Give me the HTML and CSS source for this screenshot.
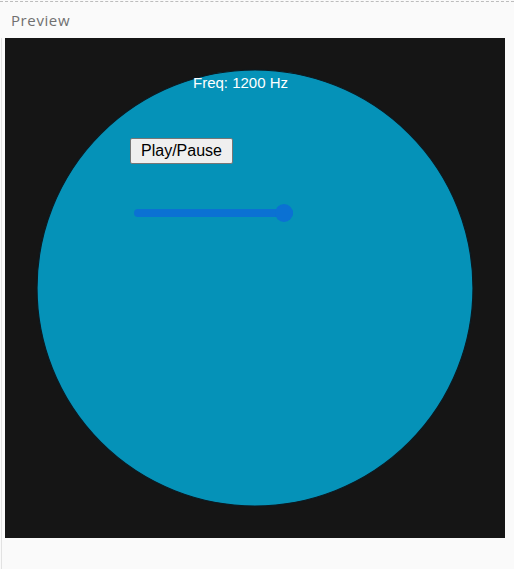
FILE: index.html
```html
<!DOCTYPE html>
<html>
<head>
<meta charset="utf-8">
<link rel="stylesheet" href="styles.css">
</head>
<body>
<div class="panel">
  <div class="title">Preview</div>
  <div class="stage">
    <svg class="disc" width="500" height="500" viewBox="0 0 500 500">
      <circle cx="250" cy="250" r="218" fill="#0592b8" stroke="#0b1a22" stroke-width="1.2"/>
    </svg>
    <div class="freq">Freq: 1200 Hz</div>
    <button class="play">Play/Pause</button>
    <input class="slider" type="range" min="100" max="1200" value="1200">
  </div>
</div>
</body>
</html>
```
FILE: styles.css
```css
html, body {
  margin: 0;
  padding: 0;
  background: #fafafa;
}
.panel {
  width: 514px;
  height: 569px;
  box-sizing: border-box;
  border-top: 1px dashed #bdbdbd;
  margin-top: 1px;
  position: relative;
}
.title {
  font-family: "Open Sans", "Liberation Sans", sans-serif;
  font-size: 15px;
  letter-spacing: 0.6px;
  color: #707070;
  padding: 8px 0 0 11px;
  height: 28px;
  box-sizing: border-box;
  line-height: 20px;
}
.stage {
  position: relative;
  width: 500px;
  height: 500px;
  margin-left: 5px;
  margin-top: 8px;
  background: #151515;
  overflow: hidden;
}
.panel::before {
  content: "";
  position: absolute;
  left: 1px;
  top: 36px;
  bottom: 0;
  width: 1px;
  background: #e2e2e2;
}
.disc {
  position: absolute;
  left: 0;
  top: 0;
}
.freq {
  position: absolute;
  left: 188px;
  top: 37px;
  font-family: "Liberation Sans", Arial, sans-serif;
  font-size: 15px;
  color: #ffffff;
  line-height: 16px;
}
.play {
  position: absolute;
  left: 125px;
  top: 100px;
  width: 103px;
  height: 26px;
  margin: 0;
  padding: 0;
  font-family: "Liberation Sans", Arial, sans-serif;
  font-size: 16px;
  color: #000;
  background: #efefef;
  border: 1px solid #767676;
  border-radius: 2px;
}
.slider {
  position: absolute;
  left: 129px;
  top: 166px;
  width: 159px;
  height: 18px;
  margin: 0;
  padding: 0;
  -webkit-appearance: none;
  appearance: none;
  background: transparent;
}
.slider::-webkit-slider-runnable-track {
  height: 8px;
  border-radius: 4px;
  background: #0b71d3;
}
.slider::-webkit-slider-thumb {
  -webkit-appearance: none;
  appearance: none;
  width: 18px;
  height: 18px;
  margin-top: -5px;
  border-radius: 50%;
  background: #0b71d3;
  border: none;
}
```
